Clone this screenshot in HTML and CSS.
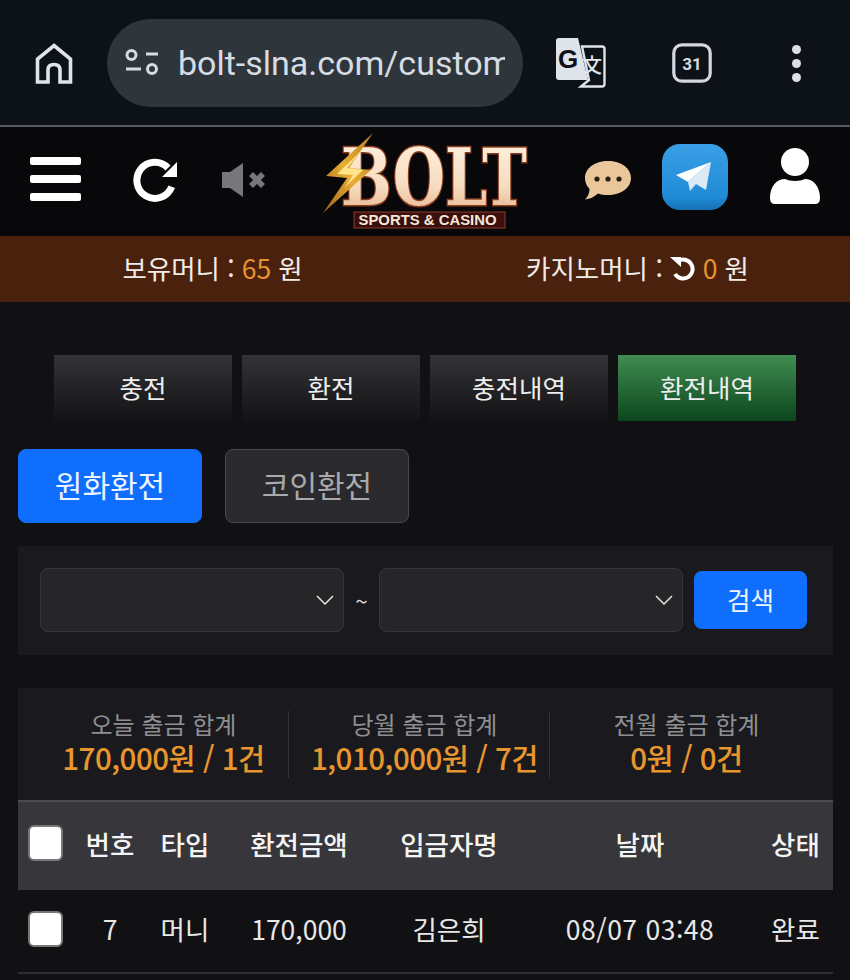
FILE: index.html
```html
<!DOCTYPE html>
<html lang="ko">
<head>
    <meta charset="UTF-8">
    <meta name="viewport" content="width=device-width, initial-scale=1.0">
    <title>BOLT - 환전내역</title>
    <link rel="stylesheet" href="styles.css">
</head>
<body>
    <div class="browser-bar">
        <svg class="home-icon" viewBox="0 0 38 41" width="38" height="41" fill="none" stroke="#dfe4ea" stroke-width="3.6">
            <path d="M19 2.5 L35.5 16 V39 H25 V27 Q25 21.5 19 21.5 Q13 21.5 13 27 V39 H2.5 V16 Z"/>
        </svg>
        <div class="url-pill">
            <svg class="tune-icon" viewBox="0 0 36 30" width="36" height="30" fill="none" stroke="#d5dce4" stroke-width="3">
                <circle cx="6.500" cy="7" r="4.500"/>
                <circle cx="27" cy="21" r="4.500"/>
                <path d="M21 6 H33 M1 21 H16"/>
            </svg>
            <span class="url-text">bolt-slna.com/custom</span>
        </div>
        <svg class="translate-icon" viewBox="0 0 50 50" width="50" height="50">
            <path d="M3 0 H22 L32 42 H3 Q0 42 0 39 V3 Q0 0 3 0 Z" fill="#dfe3ea"/>
            <path d="M26 8.500 H46 Q48.500 8.500 48.500 11 V46 Q48.500 48.500 46 48.500 H25 L33 42 Z" fill="#0d1219" stroke="#dfe3ea" stroke-width="2.400"/>
            <text x="2" y="30" class="translate-g">G</text>
            <text x="26" y="35" class="translate-x">文</text>
        </svg>
        <svg class="calendar-icon" viewBox="0 0 40 40" width="40" height="40">
            <rect x="1.800" y="1.800" width="36.400" height="36.400" rx="8" fill="none" stroke="#d5d9df" stroke-width="3.200"/>
            <text x="20" y="26.500" text-anchor="middle" class="calendar-num">31</text>
        </svg>
        <div class="dots"><i></i><i></i><i></i></div>
    </div>

    <div class="site-header">
        <div class="hamburger"><i></i><i></i><i></i></div>
        <svg class="refresh-icon" viewBox="0 0 44 44" width="44" height="44" fill="none">
            <path d="M35 10 A18 18 0 1 0 38.700 28.700" stroke="#fff" stroke-width="7"/>
            <path d="M44 4 V19 H29 Z" fill="#fff"/>
        </svg>
        <svg class="mute-icon" viewBox="0 0 46 34" width="46" height="34" fill="#77777a">
            <path d="M1 9 H9 L22 0 V34 L9 25 H1 Z"/>
            <path d="M30 11 L42 23 M42 11 L30 23" stroke="#77777a" stroke-width="5.500"/>
        </svg>
        <svg class="logo" viewBox="0 0 208 100" width="208" height="100">
            <defs>
                <linearGradient id="boltFill" x1="0" y1="0" x2="0" y2="1">
                    <stop offset="0" stop-color="#fff3e2"/>
                    <stop offset="0.6" stop-color="#f6dcc0"/>
                    <stop offset="1" stop-color="#e0aa80"/>
                </linearGradient>
                <linearGradient id="flashFill" x1="1" y1="0" x2="0" y2="1">
                    <stop offset="0" stop-color="#b57c25"/>
                    <stop offset="0.5" stop-color="#e9ae35"/>
                    <stop offset="1" stop-color="#9a5c18"/>
                </linearGradient>
            </defs>
            <text x="18" y="72" textLength="186" lengthAdjust="spacingAndGlyphs" class="logo-word">BOLT</text>
            <path d="M50 0 L3 43 L24 45 L0 80 L48 37 L26 35 Z" fill="url(#flashFill)"/>
            <path d="M38 18 L14 41 L30 42 L22 54 L40 37 L24 35 Z" fill="#ffe58a"/>
            <rect x="31" y="79" width="151" height="16" fill="#3a0f0c" stroke="#8c3d2c"/>
            <text x="104.500" y="92" text-anchor="middle" textLength="138" lengthAdjust="spacingAndGlyphs" class="logo-sub">SPORTS &amp; CASINO</text>
        </svg>
        <svg class="chat-icon" viewBox="0 0 46 40" width="46" height="40">
            <path d="M23 0 C36 0 46 7 46 17 C46 27 36 34 23 34 C19 34 16 33.500 13 32.500 C9 36 5 38 0 38.500 C3 35.500 4.500 32 4.500 28 C1.500 25 0 21 0 17 C0 7 10 0 23 0 Z" fill="#eac79a"/>
            <circle cx="12" cy="18" r="2.600" fill="#2b2014"/>
            <circle cx="23" cy="18" r="2.600" fill="#2b2014"/>
            <circle cx="34" cy="18" r="2.600" fill="#2b2014"/>
        </svg>
        <svg class="telegram-icon" viewBox="0 0 66 66" width="66" height="66">
            <defs>
                <linearGradient id="tgFill" x1="0" y1="0" x2="0" y2="1">
                    <stop offset="0" stop-color="#3a9fe6"/>
                    <stop offset="0.8" stop-color="#208bd6"/>
                    <stop offset="1" stop-color="#1672b5"/>
                </linearGradient>
            </defs>
            <rect width="66" height="66" rx="18" fill="url(#tgFill)"/>
            <path d="M14 31 L49 18 L26 38 Z" fill="#fff"/>
            <path d="M49 18 L26 38 L28 47 L34 40 L44 46 Z" fill="#dbeaf5"/>
        </svg>
        <svg class="user-icon" viewBox="0 0 50 56" width="50" height="56" fill="#fff">
            <circle cx="25" cy="14" r="14"/>
            <path d="M0 50 C0 38 7 31 15 31 C20 33.500 30 33.500 35 31 C43 31 50 38 50 50 Q50 56 45 56 H5 Q0 56 0 50 Z"/>
        </svg>
    </div>

    <div class="balance-bar">
        <div class="balance-item">보유머니 : <span class="money">65</span> 원</div>
        <div class="balance-item">카지노머니 :
            <svg class="undo-icon" viewBox="0 0 26 26" width="26" height="26" fill="none">
                <path d="M8 6 A9.500 9.500 0 1 1 5 19" stroke="#fff" stroke-width="4"/>
                <path d="M0 2 H11 V12 Z" fill="#fff"/>
            </svg>
            <span class="money">0</span> 원</div>
    </div>

    <div class="content">
        <div class="tabs">
            <div class="tab">충전</div>
            <div class="tab">환전</div>
            <div class="tab">충전내역</div>
            <div class="tab tab-active">환전내역</div>
        </div>

        <div class="sub-tabs">
            <div class="sub-tab sub-tab-active">원화환전</div>
            <div class="sub-tab">코인환전</div>
        </div>

        <div class="filter">
            <div class="select">
                <svg viewBox="0 0 18 10" width="18" height="10" fill="none" stroke="#e4e4e4" stroke-width="1.500"><path d="M1 1 L9 9 L17 1"/></svg>
            </div>
            <span class="tilde">~</span>
            <div class="select">
                <svg viewBox="0 0 18 10" width="18" height="10" fill="none" stroke="#e4e4e4" stroke-width="1.500"><path d="M1 1 L9 9 L17 1"/></svg>
            </div>
            <button class="search-btn">검색</button>
        </div>

        <div class="summary">
            <div class="summary-cell cell-first">
                <div class="summary-label">오늘 출금 합계</div>
                <div class="summary-value">170,000원 / 1건</div>
            </div>
            <div class="summary-cell cell-mid">
                <div class="summary-label">당월 출금 합계</div>
                <div class="summary-value">1,010,000원 / 7건</div>
            </div>
            <div class="summary-cell cell-last">
                <div class="summary-label">전월 출금 합계</div>
                <div class="summary-value">0원 / 0건</div>
            </div>
        </div>

        <table class="history">
            <colgroup>
                <col class="col-check"><col class="col-no"><col class="col-type"><col class="col-amount"><col class="col-name"><col class="col-date"><col class="col-state">
            </colgroup>
            <thead>
                <tr>
                    <th><div class="check check-head"></div></th>
                    <th>번호</th>
                    <th>타입</th>
                    <th>환전금액</th>
                    <th>입금자명</th>
                    <th>날짜</th>
                    <th>상태</th>
                </tr>
            </thead>
            <tbody>
                <tr>
                    <td><div class="check check-row"></div></td>
                    <td>7</td>
                    <td>머니</td>
                    <td>170,000</td>
                    <td>김은희</td>
                    <td class="cell-date">08/07 03:48</td>
                    <td>완료</td>
                </tr>
            </tbody>
        </table>
    </div>
</body>
</html>
```

FILE: styles.css
```css
* { margin: 0; padding: 0; box-sizing: border-box; }

body {
    font-family: "Noto Sans CJK KR", "Noto Sans", sans-serif;
    background: #111114;
    color: #eee;
    width: 850px;
    height: 980px;
    overflow: hidden;
}

/* browser chrome */
.browser-bar {
    height: 127px;
    background: #0d1219;
    border-bottom: 2px solid #55585c;
    padding: 19px 0 0 35px;
    display: flex;
    align-items: flex-start;
}

.home-icon { margin-top: 24px; flex: none; }

.url-pill {
    width: 416px;
    height: 88px;
    margin-left: 34px;
    background: #2f363b;
    border-radius: 44px;
    display: flex;
    align-items: center;
    padding-left: 18px;
    flex: none;
}

.tune-icon { flex: none; }

.url-text {
    font-family: Roboto, sans-serif;
    font-size: 34px;
    color: #d5dce4;
    margin-left: 17px;
    width: 327px;
    overflow: hidden;
    white-space: nowrap;
}

.translate-icon { margin: 19px 0 0 33px; flex: none; }
.translate-g { font-family: "Liberation Sans", sans-serif; font-size: 26px; font-weight: bold; fill: #0d1219; }
.translate-x { font-family: "Noto Sans CJK SC", sans-serif; font-size: 20px; font-weight: 500; fill: #dfe3ea; }

.calendar-icon { margin: 24px 0 0 66px; flex: none; }
.calendar-num { font-family: Roboto, sans-serif; font-size: 17px; font-weight: bold; fill: #d5d9df; }

.dots {
    margin: 26px 0 0 80px;
    display: flex;
    flex-direction: column;
    gap: 5px;
}

.dots i {
    display: block;
    width: 9px;
    height: 9px;
    border-radius: 50%;
    background: #dcdfe3;
}

/* site header */
.site-header {
    height: 109px;
    background: #08080b;
    padding-left: 30px;
    display: flex;
    align-items: flex-start;
}

.hamburger {
    width: 51px;
    margin-top: 30px;
    display: flex;
    flex-direction: column;
    gap: 10px;
}

.hamburger i {
    display: block;
    height: 8px;
    background: #fff;
    border-radius: 2px;
}

.refresh-icon { margin: 31px 0 0 52px; }
.mute-icon { margin: 36px 0 0 44px; }
.logo { margin: 6px 0 0 56px; }
.logo-word {
    font-family: "DejaVu Serif", serif;
    font-size: 78px;
    font-weight: bold;
    fill: url(#boltFill);
    stroke: #8a3d1e;
    stroke-width: 3;
    paint-order: stroke;
}
.logo-sub {
    font-family: "Liberation Sans", sans-serif;
    font-size: 14px;
    font-weight: bold;
    fill: #f4e6d8;
}
.chat-icon { margin: 34px 0 0 54px; }
.telegram-icon { margin: 17px 0 0 31px; }
.user-icon { margin: 21px 0 0 42px; }

/* balance */
.balance-bar {
    height: 66px;
    background: #4a210d;
    display: flex;
}

.balance-item {
    flex: 1;
    display: flex;
    align-items: center;
    justify-content: center;
    gap: 7px;
    font-size: 26.5px;
    color: #f0ece8;
    padding-bottom: 4px;
}

.money { color: #e8912d; }
.undo-icon { flex: none; margin-top: 2px; }

/* content */
.content { padding: 53px 17px 0 18px; }

.tabs {
    display: flex;
    gap: 10px;
    padding-left: 36px;
}

.tab {
    width: 178px;
    height: 66px;
    display: flex;
    align-items: center;
    justify-content: center;
    font-size: 25.5px;
    padding-bottom: 4px;
    background: linear-gradient(180deg, #333336 0%, #131316 100%);
}

.tab-active {
    background: linear-gradient(180deg, #418c52 0%, #0b471d 100%);
}

.sub-tabs {
    display: flex;
    gap: 23px;
    margin-top: 28px;
}

.sub-tab {
    width: 184px;
    height: 74px;
    display: flex;
    align-items: center;
    justify-content: center;
    font-size: 30px;
    padding-bottom: 4px;
    color: #aaa;
    background: #2a292d;
    border: 1px solid #49484c;
    border-radius: 8px;
}

.sub-tab-active {
    color: #eef5ff;
    background: #0f6efd;
    border-color: #0f6efd;
}

.filter {
    height: 109px;
    margin-top: 23px;
    padding: 0 26px 1px 22px;
    background: #1a1a1e;
    display: flex;
    align-items: center;
}

.select {
    width: 304px;
    height: 64px;
    background: #262629;
    border: 1px solid #36363a;
    border-radius: 8px;
    display: flex;
    align-items: center;
    justify-content: flex-end;
    padding-right: 9px;
}

.tilde {
    width: 35px;
    text-align: center;
    font-size: 22px;
    color: #ddd;
}

.search-btn {
    width: 113px;
    height: 58px;
    margin-left: 11px;
    padding-bottom: 4px;
    background: #0f6efd;
    color: #eef5ff;
    border: none;
    border-radius: 8px;
    font-family: inherit;
    font-size: 25.5px;
}

.summary {
    height: 112px;
    margin-top: 33px;
    background: #1a1a1e;
    display: grid;
    grid-template-columns: 271px 261px 283px;
    align-items: center;
}

.summary-cell {
    height: 67px;
    text-align: center;
    white-space: nowrap;
}

.cell-first { padding-left: 21px; border-right: 1px solid #333336; }
.cell-mid { padding-left: 11px; border-right: 1px solid #333336; }
.cell-last { padding-right: 10px; }

.summary-label {
    font-size: 24px;
    line-height: 26px;
    color: #8f8f92;
}

.summary-value {
    font-size: 29.5px;
    line-height: 40px;
    font-weight: 500;
    color: #e8962e;
    letter-spacing: -0.5px;
}

.history {
    width: 815px;
    table-layout: fixed;
    border-collapse: collapse;
}

.col-check { width: 54px; }
.col-no { width: 76px; }
.col-type { width: 74px; }
.col-amount { width: 154px; }
.col-name { width: 146px; }
.col-date { width: 236px; }
.col-state { width: 75px; }

.history th {
    height: 89px;
    padding-bottom: 5px;
    background: #37363a;
    border-top: 2px solid #4b4a4e;
    font-size: 26.5px;
    font-weight: 500;
    color: #f4f4f4;
    text-align: center;
}

.history td {
    height: 83px;
    padding-bottom: 5px;
    border-bottom: 2px solid #2e2e31;
    font-size: 26.5px;
    color: #e8e8e8;
    text-align: center;
    white-space: nowrap;
}

.history td.cell-date { letter-spacing: 0.5px; }

.check {
    width: 35px;
    height: 36px;
    margin-left: 10px;
    background: #fff;
    border: 2px solid #77777a;
    border-radius: 6px;
}

.check-head { margin-bottom: 1px; }
.check-row { margin-top: 1px; }
```
